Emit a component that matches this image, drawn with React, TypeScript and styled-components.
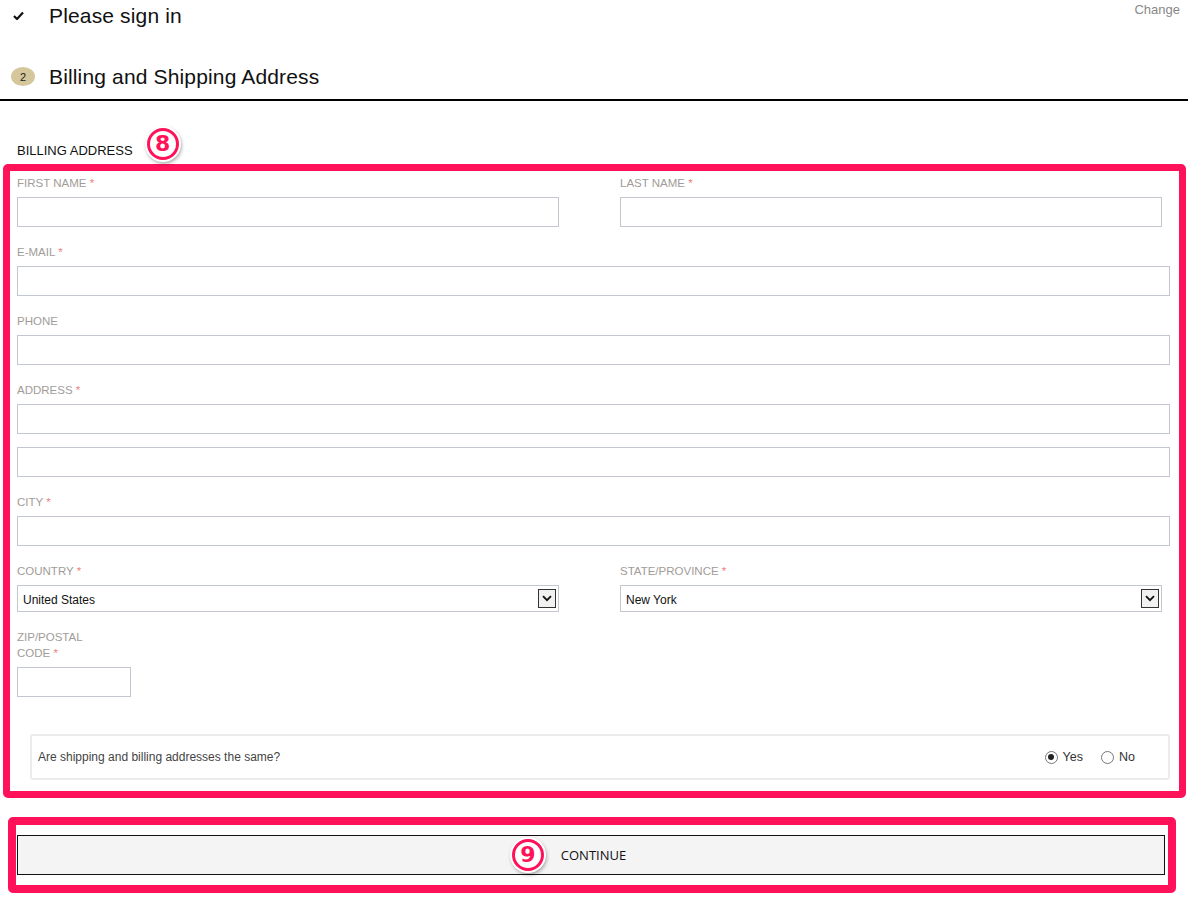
import styled, { createGlobalStyle } from 'styled-components'

const PINK = '#ff1259'
const FONT = '"Liberation Sans", Arial, sans-serif'

const GlobalStyle = createGlobalStyle`
  html, body {
    margin: 0;
    padding: 0;
    background: #fff;
  }
  body {
    font-family: ${FONT};
    color: #111;
  }
`

const Page = styled.div`
  width: 1201px;
  padding-bottom: 11px;
`

const StepRow = styled.div<{ $gap?: number }>`
  display: flex;
  align-items: center;
  height: 31px;
  margin-top: ${(p) => p.$gap ?? 0}px;
`

const StepMark = styled.div`
  width: 36px;
  margin-left: 11px;
  display: flex;
  align-items: center;
`

const Badge = styled.span`
  width: 24px;
  height: 19px;
  border-radius: 50%;
  background: #d5c69c;
  color: #222;
  font-size: 11px;
  display: flex;
  align-items: center;
  justify-content: center;
`

const StepTitle = styled.h2`
  margin: 0 0 0 2px;
  font-size: 21px;
  font-weight: 400;
  letter-spacing: 0.15px;
  color: #111;
`

const ChangeLink = styled.a`
  margin-left: auto;
  margin-right: 21px;
  align-self: flex-start;
  margin-top: 2px;
  font-size: 13px;
  line-height: 16px;
  color: #888;
  cursor: pointer;
`

const Divider = styled.hr`
  width: 1188px;
  margin: 7px 0 0;
  border: 0;
  border-top: 2px solid #000;
`

const SectionHead = styled.div`
  display: flex;
  align-items: flex-end;
  gap: 14px;
  margin: 27px 0 4px 17px;
`

const SectionTitle = styled.h3`
  margin: 0 0 1px;
  font-size: 13px;
  line-height: 16px;
  font-weight: 400;
  color: #111;
`

const Callout = styled.span`
  width: 26px;
  height: 26px;
  border-radius: 50%;
  background: #fff;
  border: 3px solid ${PINK};
  box-shadow: 0 0 0 2px #fff, 1px 2px 4px 1px rgba(0, 0, 0, 0.45);
  color: ${PINK};
  font-family: "DejaVu Sans", sans-serif;
  font-weight: 700;
  font-size: 22px;
  line-height: 26px;
  text-align: center;
`

const FloatingCallout = styled(Callout)`
  position: absolute;
  right: calc(100% + 17px);
  top: 50%;
  transform: translateY(-50%);
`

const MarkBox = styled.div`
  margin-left: 3px;
  width: 1183px;
  box-sizing: border-box;
  border: 7px solid ${PINK};
  border-radius: 5px;
  padding: 4px 9px 11px 7px;
`

const Row = styled.div`
  display: grid;
  grid-template-columns: 542px 542px;
  column-gap: 61px;
`

const Field = styled.div`
  display: flex;
  flex-direction: column;
  margin-bottom: 17px;
`

const Label = styled.label`
  font-size: 11.5px;
  line-height: 16px;
  color: #a19c98;
  margin-bottom: 6px;
`

const LabelLine = styled.span`
  display: block;
`

const Req = styled.span`
  color: #ef7f7f;
`

const Input = styled.input<{ $w?: number }>`
  box-sizing: border-box;
  height: 30px;
  width: ${(p) => (p.$w ? `${p.$w}px` : '100%')};
  border: 1px solid #c3c7d0;
  background: #fff;
  margin: 0;
  padding: 0 6px;
  font-family: ${FONT};
  font-size: 12px;
  outline: none;
  & + & {
    margin-top: 13px;
  }
`

const SelectWrap = styled.div`
  position: relative;
  height: 27px;
`

const Select = styled.select`
  box-sizing: border-box;
  width: 100%;
  height: 27px;
  border: 1px solid #c3c7d0;
  background: #fff;
  appearance: none;
  padding: 2px 5px 0;
  font-family: ${FONT};
  font-size: 12px;
  color: #111;
  outline: none;
`

const SelectArrow = styled.span`
  position: absolute;
  right: 3px;
  top: 4px;
  width: 16px;
  height: 17px;
  border: 1px solid #333;
  background: #f1f1f1;
  display: flex;
  align-items: center;
  justify-content: center;
  pointer-events: none;
`

const SamePanel = styled.div`
  margin: 37px 0 0 13px;
  height: 46px;
  box-sizing: border-box;
  border: 2px solid #ececec;
  border-radius: 3px;
  display: flex;
  align-items: center;
  padding: 0 33px 0 6px;
  font-size: 12px;
  color: #444;
`

const RadioGroup = styled.div`
  margin-left: auto;
  display: flex;
  gap: 18px;
`

const RadioOption = styled.label`
  display: flex;
  align-items: center;
  gap: 5px;
  font-size: 12.5px;
  color: #333;
`

const RadioDot = styled.span<{ $on?: boolean }>`
  width: 11px;
  height: 11px;
  border-radius: 50%;
  border: 1px solid #777;
  background: #fff;
  display: flex;
  align-items: center;
  justify-content: center;
  &::after {
    content: '';
    width: 6px;
    height: 6px;
    border-radius: 50%;
    background: ${(p) => (p.$on ? '#222' : 'transparent')};
  }
`

const ButtonBox = styled.div`
  margin: 19px 0 0 8px;
  width: 1168px;
  box-sizing: border-box;
  border: 8px solid ${PINK};
  border-radius: 5px;
  padding: 10px 3px 10px 1px;
`

const ContinueButton = styled.button`
  width: 100%;
  height: 40px;
  box-sizing: border-box;
  border: 1.5px solid #111;
  background: #f4f4f4;
  font-family: "Open Sans", sans-serif;
  font-size: 13px;
  color: #111;
  display: flex;
  align-items: center;
  justify-content: center;
`

const ButtonLabel = styled.span`
  position: relative;
  margin-left: 5px;
`

function Chevron() {
  return (
    <svg width="10" height="7" viewBox="0 0 10 7">
      <path d="M1 1.2 L5 5.2 L9 1.2" fill="none" stroke="#111" strokeWidth="1.8" />
    </svg>
  )
}

function CheckIcon() {
  return (
    <svg width="11" height="9" viewBox="0 0 11 9" style={{ marginLeft: 2 }}>
      <path d="M1 5 L4 8 L10 1.5" fill="none" stroke="#111" strokeWidth="2.2" />
    </svg>
  )
}

function TextField({ label, required }: { label: string; required?: boolean }) {
  return (
    <Field>
      <Label>
        {label} {required && <Req>*</Req>}
      </Label>
      <Input />
    </Field>
  )
}

function SelectField({ label, value }: { label: string; value: string }) {
  return (
    <Field>
      <Label>
        {label} <Req>*</Req>
      </Label>
      <SelectWrap>
        <Select defaultValue={value}>
          <option>{value}</option>
        </Select>
        <SelectArrow>
          <Chevron />
        </SelectArrow>
      </SelectWrap>
    </Field>
  )
}

export default function App() {
  return (
    <Page>
      <GlobalStyle />
      <StepRow>
        <StepMark>
          <CheckIcon />
        </StepMark>
        <StepTitle>Please sign in</StepTitle>
        <ChangeLink>Change</ChangeLink>
      </StepRow>
      <StepRow $gap={30}>
        <StepMark>
          <Badge>2</Badge>
        </StepMark>
        <StepTitle>Billing and Shipping Address</StepTitle>
      </StepRow>
      <Divider />

      <SectionHead>
        <SectionTitle>BILLING ADDRESS</SectionTitle>
        <Callout>8</Callout>
      </SectionHead>

      <MarkBox>
        <Row>
          <TextField label="FIRST NAME" required />
          <TextField label="LAST NAME" required />
        </Row>
        <TextField label="E-MAIL" required />
        <TextField label="PHONE" />
        <Field>
          <Label>
            ADDRESS <Req>*</Req>
          </Label>
          <Input />
          <Input />
        </Field>
        <TextField label="CITY" required />
        <Row>
          <SelectField label="COUNTRY" value="United States" />
          <SelectField label="STATE/PROVINCE" value="New York" />
        </Row>
        <Field>
          <Label>
            <LabelLine>ZIP/POSTAL</LabelLine>
            <LabelLine>
              CODE <Req>*</Req>
            </LabelLine>
          </Label>
          <Input $w={114} />
        </Field>

        <SamePanel>
          Are shipping and billing addresses the same?
          <RadioGroup>
            <RadioOption>
              <RadioDot $on />
              Yes
            </RadioOption>
            <RadioOption>
              <RadioDot />
              No
            </RadioOption>
          </RadioGroup>
        </SamePanel>
      </MarkBox>

      <ButtonBox>
        <ContinueButton>
          <ButtonLabel>
            <FloatingCallout>9</FloatingCallout>
            CONTINUE
          </ButtonLabel>
        </ContinueButton>
      </ButtonBox>
    </Page>
  )
}
